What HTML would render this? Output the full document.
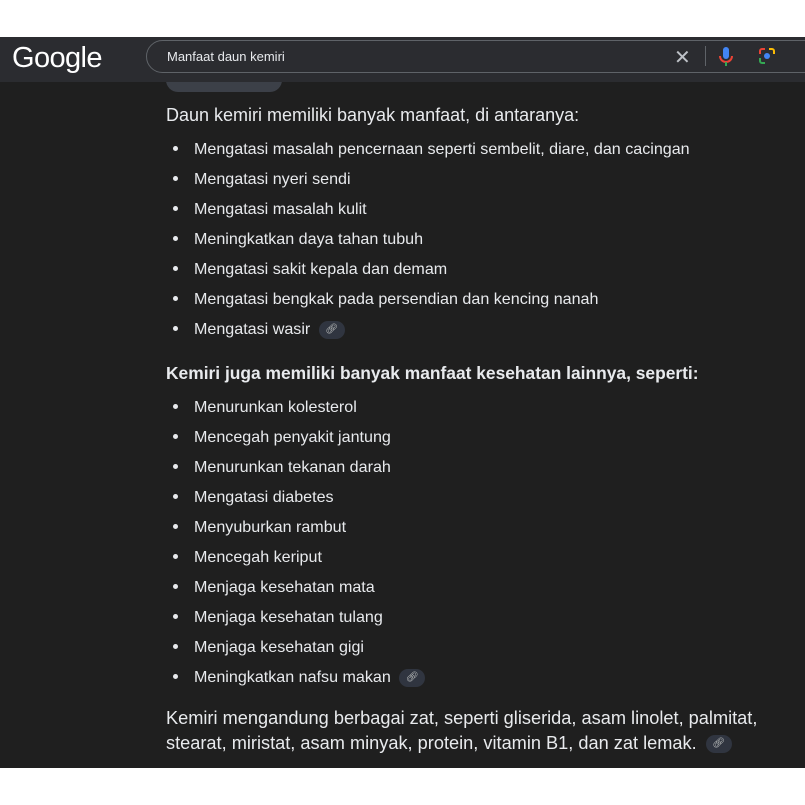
<!DOCTYPE html>
<html><head><meta charset="utf-8"><style>
body{margin:0;width:805px;height:805px;background:#fff;font-family:"Liberation Sans",sans-serif;overflow:hidden;position:relative}
#dark{position:absolute;left:0;top:37px;width:805px;height:731px;background:#1f1f1f}
#hdr{position:absolute;left:0;top:37px;width:805px;height:45px;background:#2b2c30}
#logo{position:absolute;left:12px;top:42px;color:#fff;font-size:29px;letter-spacing:-0.6px}
#box{position:absolute;left:146px;top:40px;width:700px;height:31px;border:1px solid #5f6368;border-radius:17px;background:#2b2c30}
#q{position:absolute;left:167px;top:49px;color:#e8eaed;font-size:13px}
.t{position:absolute;color:#e8eaed;font-size:16.1px;white-space:nowrap}
.b{position:absolute;left:173px;width:5px;height:5px;border-radius:50%;background:#e8eaed}
.lk{display:inline-block;width:26px;height:18px;border-radius:9px;background:#303540;vertical-align:middle;margin-left:4px;color:#c4c7c5;font-size:10px;text-align:center;line-height:18px}
</style></head><body>
<div id="dark"></div>
<div style="position:absolute;left:166px;top:78px;width:116px;height:14px;border-radius:0 0 12px 12px;background:#3c4048"></div>
<div id="hdr"></div>
<div id="logo">Google</div>
<div id="box"></div>
<div id="q">Manfaat daun kemiri</div>
<div style="position:absolute;left:674px;top:45px;color:#bdc1c6;font-size:20px">✕</div>
<div style="position:absolute;left:705px;top:46px;width:1px;height:20px;background:#5f6368"></div>
<svg style="position:absolute;left:719px;top:47px" width="14" height="20"><rect x="4" y="0" width="6" height="12" rx="3" fill="#4285f4"/><path d="M1 9a6 6 0 0 0 12 0" stroke="#ea4335" stroke-width="2" fill="none"/><rect x="6" y="15" width="2" height="4" fill="#34a853"/></svg>
<svg style="position:absolute;left:758px;top:47px" width="18" height="18"><path d="M2 7V4a2 2 0 0 1 2-2h3" stroke="#ea4335" stroke-width="2" fill="none"/><path d="M11 2h3a2 2 0 0 1 2 2v3" stroke="#fbbc05" stroke-width="2" fill="none"/><path d="M2 11v3a2 2 0 0 0 2 2h3" stroke="#34a853" stroke-width="2" fill="none"/><circle cx="9" cy="9" r="3" fill="#4285f4"/></svg>
<div class="t" style="left:166px;top:105px;font-size:18px">Daun kemiri memiliki banyak manfaat, di antaranya:</div>
<div class="b" style="top:146px"></div><div class="t" style="left:194px;top:140px">Mengatasi masalah pencernaan seperti sembelit, diare, dan cacingan</div>
<div class="b" style="top:176px"></div><div class="t" style="left:194px;top:170px">Mengatasi nyeri sendi</div>
<div class="b" style="top:206px"></div><div class="t" style="left:194px;top:200px">Mengatasi masalah kulit</div>
<div class="b" style="top:236px"></div><div class="t" style="left:194px;top:230px">Meningkatkan daya tahan tubuh</div>
<div class="b" style="top:266px"></div><div class="t" style="left:194px;top:260px">Mengatasi sakit kepala dan demam</div>
<div class="b" style="top:296px"></div><div class="t" style="left:194px;top:290px">Mengatasi bengkak pada persendian dan kencing nanah</div>
<div class="b" style="top:326px"></div><div class="t" style="left:194px;top:320px">Mengatasi wasir <span class="lk">🔗︎</span></div>
<div class="t" style="left:166px;top:363px;font-size:17.4px;font-weight:bold">Kemiri juga memiliki banyak manfaat kesehatan lainnya, seperti:</div>
<div class="b" style="top:404px"></div><div class="t" style="left:194px;top:398px">Menurunkan kolesterol</div>
<div class="b" style="top:434px"></div><div class="t" style="left:194px;top:428px">Mencegah penyakit jantung</div>
<div class="b" style="top:464px"></div><div class="t" style="left:194px;top:458px">Menurunkan tekanan darah</div>
<div class="b" style="top:494px"></div><div class="t" style="left:194px;top:488px">Mengatasi diabetes</div>
<div class="b" style="top:524px"></div><div class="t" style="left:194px;top:518px">Menyuburkan rambut</div>
<div class="b" style="top:554px"></div><div class="t" style="left:194px;top:548px">Mencegah keriput</div>
<div class="b" style="top:584px"></div><div class="t" style="left:194px;top:578px">Menjaga kesehatan mata</div>
<div class="b" style="top:614px"></div><div class="t" style="left:194px;top:608px">Menjaga kesehatan tulang</div>
<div class="b" style="top:644px"></div><div class="t" style="left:194px;top:638px">Menjaga kesehatan gigi</div>
<div class="b" style="top:674px"></div><div class="t" style="left:194px;top:668px">Meningkatkan nafsu makan <span class="lk">🔗︎</span></div>
<div class="t" style="left:166px;top:708px;font-size:18.2px">Kemiri mengandung berbagai zat, seperti gliserida, asam linolet, palmitat,</div>
<div class="t" style="left:166px;top:733px;font-size:18.2px">stearat, miristat, asam minyak, protein, vitamin B1, dan zat lemak. <span class="lk">🔗︎</span></div>
</body></html>
